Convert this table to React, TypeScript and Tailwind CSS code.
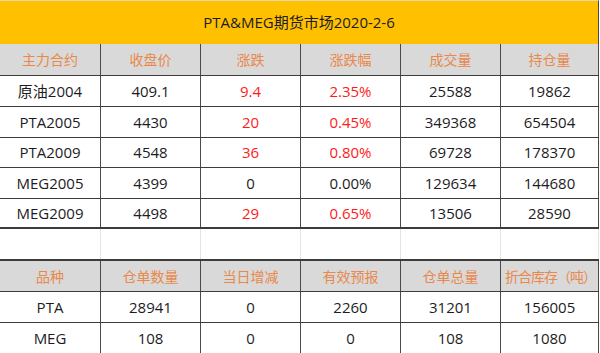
import React from "react";

type Cell = { text: string; red?: boolean };

const font = { fontFamily: '"Open Sans", "Noto Sans CJK SC", sans-serif' };

const widths = ["w-[101px]", "w-[100px]", "w-[100px]", "w-[100px]", "w-[100px]", "w-[98px]"];

const head1 = ["主力合约", "收盘价", "涨跌", "涨跌幅", "成交量", "持仓量"];
const rows1: Cell[][] = [
  [{ text: "原油2004" }, { text: "409.1" }, { text: "9.4", red: true }, { text: "2.35%", red: true }, { text: "25588" }, { text: "19862" }],
  [{ text: "PTA2005" }, { text: "4430" }, { text: "20", red: true }, { text: "0.45%", red: true }, { text: "349368" }, { text: "654504" }],
  [{ text: "PTA2009" }, { text: "4548" }, { text: "36", red: true }, { text: "0.80%", red: true }, { text: "69728" }, { text: "178370" }],
  [{ text: "MEG2005" }, { text: "4399" }, { text: "0" }, { text: "0.00%" }, { text: "129634" }, { text: "144680" }],
  [{ text: "MEG2009" }, { text: "4498" }, { text: "29", red: true }, { text: "0.65%", red: true }, { text: "13506" }, { text: "28590" }],
];
const rowHeights1 = ["h-[31px]", "h-[31px]", "h-[30px]", "h-[31px]", "h-[30px]"];

const head2 = ["品种", "仓单数量", "当日增减", "有效预报", "仓单总量", "折合库存（吨）"];
const rows2: Cell[][] = [
  [{ text: "PTA" }, { text: "28941" }, { text: "0" }, { text: "2260" }, { text: "31201" }, { text: "156005" }],
  [{ text: "MEG" }, { text: "108" }, { text: "0" }, { text: "0" }, { text: "108" }, { text: "1080" }],
];

const HeadRow = ({ cells, h, extra }: { cells: string[]; h: string; extra?: string }) => (
  <div className={`flex ${h} bg-[#d9d9d9] border-b border-[#3c3c3c] ${extra ?? ""}`}>
    {cells.map((c, i) => (
      <div
        key={i}
        className={`${widths[i]} shrink-0 flex items-center justify-center border-r border-[#4a4a4a] text-[14px] text-[#e9884b] whitespace-nowrap overflow-hidden ${
          c.length > 6 ? "tracking-[-1px] pl-[2px]" : ""
        }`}
      >
        {c}
      </div>
    ))}
  </div>
);

const BodyRow = ({ cells, h, extra }: { cells: Cell[]; h: string; extra?: string }) => (
  <div className={`flex ${h} bg-white border-b border-[#3c3c3c] ${extra ?? ""}`}>
    {cells.map((c, i) => (
      <div
        key={i}
        className={`${widths[i]} shrink-0 flex items-center justify-center border-r border-[#4a4a4a] text-[15px] ${
          c.red ? "text-[#ff1a1a]" : "text-[#1c1c24]"
        }`}
      >
        {c.text}
      </div>
    ))}
  </div>
);

export default function App() {
  return (
    <div className="w-[600px] h-[353px] bg-white overflow-hidden" style={font}>
      <div className="w-[599px]">
        <div className="h-[44px] bg-[#ffc000] border-t border-[#e8d9a8] border-r border-r-[#4a4a4a] flex items-center justify-center text-[15px] text-[#1c1c24]">
          PTA&amp;MEG期货市场2020-2-6
        </div>
        <HeadRow cells={head1} h="h-[32px]" />
        {rows1.map((r, i) => (
          <BodyRow key={i} cells={r} h={rowHeights1[i]} extra={i === rows1.length - 1 ? "border-b-2" : ""} />
        ))}
        <div className="flex h-[30px] bg-white">
          {widths.map((w, i) => (
            <div key={i} className={`${w} shrink-0 border-r border-[#e4e4e4]`} />
          ))}
        </div>
        <HeadRow cells={head2} h="h-[33px]" extra="border-t-2 border-t-[#3c3c3c]" />
        {rows2.map((r, i) => (
          <BodyRow key={i} cells={r} h="h-[31px]" />
        ))}
      </div>
    </div>
  );
}
